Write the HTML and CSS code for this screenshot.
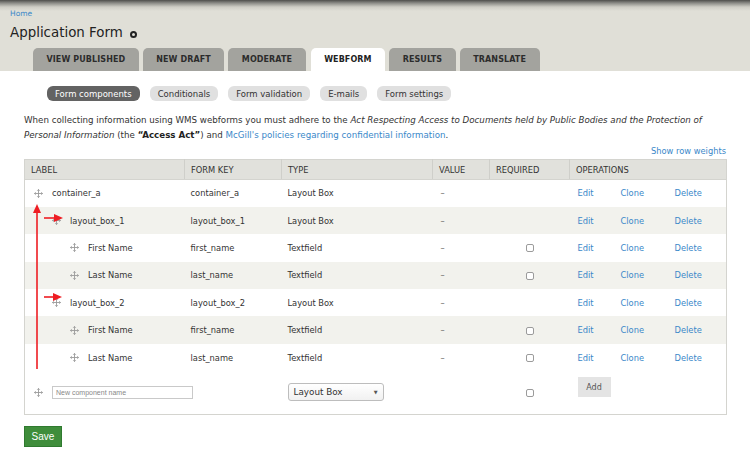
FILE: index.html
```html
<!DOCTYPE html>
<html>
<head>
<meta charset="utf-8">
<link rel="stylesheet" href="styles.css">
</head>
<body>
<header class="header">
  <a class="crumb" href="#">Home</a>
  <h1 class="title">Application Form <span class="ring"></span></h1>
  <nav class="tabs">
    <a class="tab" href="#">VIEW PUBLISHED</a>
    <a class="tab" href="#">NEW DRAFT</a>
    <a class="tab" href="#">MODERATE</a>
    <a class="tab active" href="#">WEBFORM</a>
    <a class="tab" href="#">RESULTS</a>
    <a class="tab" href="#">TRANSLATE</a>
  </nav>
</header>
<main class="main">
  <div class="subtabs">
    <a class="pill active" href="#">Form components</a>
    <a class="pill" href="#">Conditionals</a>
    <a class="pill" href="#">Form validation</a>
    <a class="pill" href="#">E-mails</a>
    <a class="pill" href="#">Form settings</a>
  </div>
  <p class="intro">When collecting information using WMS webforms you must adhere to the <em>Act Respecting Access to Documents held by Public Bodies and the Protection of Personal Information</em> (the <strong>“Access Act”</strong>) and <a href="#">McGill's policies regarding confidential information</a>.</p>
  <div class="weights"><a href="#">Show row weights</a></div>
  <div class="tablewrap">
    <table class="comp">
      <colgroup><col class="w-label"><col class="w-key"><col class="w-type"><col class="w-val"><col class="w-req"><col class="w-op1"><col class="w-op2"><col class="w-op3"></colgroup>
      <thead>
        <tr><th>LABEL</th><th>FORM KEY</th><th>TYPE</th><th>VALUE</th><th>REQUIRED</th><th colspan="3">OPERATIONS</th></tr>
      </thead>
      <tbody>
        <tr class="odd"><td><div class="lbl d0"><svg class="drag" viewBox="0 0 10 10"><path d="M5 0.5v9M0.5 5h9M3.6 1.9L5 0.5 6.4 1.9M3.6 8.1L5 9.5 6.4 8.1M1.9 3.6L0.5 5 1.9 6.4M8.1 3.6L9.5 5 8.1 6.4"/></svg>container_a</div></td><td>container_a</td><td>Layout Box</td><td class="val">–</td><td class="req"></td><td class="op"><a href="#">Edit</a></td><td class="op"><a href="#">Clone</a></td><td class="op"><a href="#">Delete</a></td></tr>
        <tr class="even"><td><div class="lbl d1"><svg class="drag" viewBox="0 0 10 10"><path d="M5 0.5v9M0.5 5h9M3.6 1.9L5 0.5 6.4 1.9M3.6 8.1L5 9.5 6.4 8.1M1.9 3.6L0.5 5 1.9 6.4M8.1 3.6L9.5 5 8.1 6.4"/></svg>layout_box_1</div></td><td>layout_box_1</td><td>Layout Box</td><td class="val">–</td><td class="req"></td><td class="op"><a href="#">Edit</a></td><td class="op"><a href="#">Clone</a></td><td class="op"><a href="#">Delete</a></td></tr>
        <tr class="odd"><td><div class="lbl d2"><svg class="drag" viewBox="0 0 10 10"><path d="M5 0.5v9M0.5 5h9M3.6 1.9L5 0.5 6.4 1.9M3.6 8.1L5 9.5 6.4 8.1M1.9 3.6L0.5 5 1.9 6.4M8.1 3.6L9.5 5 8.1 6.4"/></svg>First Name</div></td><td>first_name</td><td>Textfield</td><td class="val">–</td><td class="req"><span class="cb"></span></td><td class="op"><a href="#">Edit</a></td><td class="op"><a href="#">Clone</a></td><td class="op"><a href="#">Delete</a></td></tr>
        <tr class="even"><td><div class="lbl d2"><svg class="drag" viewBox="0 0 10 10"><path d="M5 0.5v9M0.5 5h9M3.6 1.9L5 0.5 6.4 1.9M3.6 8.1L5 9.5 6.4 8.1M1.9 3.6L0.5 5 1.9 6.4M8.1 3.6L9.5 5 8.1 6.4"/></svg>Last Name</div></td><td>last_name</td><td>Textfield</td><td class="val">–</td><td class="req"><span class="cb"></span></td><td class="op"><a href="#">Edit</a></td><td class="op"><a href="#">Clone</a></td><td class="op"><a href="#">Delete</a></td></tr>
        <tr class="odd"><td><div class="lbl d1"><svg class="drag" viewBox="0 0 10 10"><path d="M5 0.5v9M0.5 5h9M3.6 1.9L5 0.5 6.4 1.9M3.6 8.1L5 9.5 6.4 8.1M1.9 3.6L0.5 5 1.9 6.4M8.1 3.6L9.5 5 8.1 6.4"/></svg>layout_box_2</div></td><td>layout_box_2</td><td>Layout Box</td><td class="val">–</td><td class="req"></td><td class="op"><a href="#">Edit</a></td><td class="op"><a href="#">Clone</a></td><td class="op"><a href="#">Delete</a></td></tr>
        <tr class="even"><td><div class="lbl d2"><svg class="drag" viewBox="0 0 10 10"><path d="M5 0.5v9M0.5 5h9M3.6 1.9L5 0.5 6.4 1.9M3.6 8.1L5 9.5 6.4 8.1M1.9 3.6L0.5 5 1.9 6.4M8.1 3.6L9.5 5 8.1 6.4"/></svg>First Name</div></td><td>first_name</td><td>Textfield</td><td class="val">–</td><td class="req"><span class="cb"></span></td><td class="op"><a href="#">Edit</a></td><td class="op"><a href="#">Clone</a></td><td class="op"><a href="#">Delete</a></td></tr>
        <tr class="odd"><td><div class="lbl d2"><svg class="drag" viewBox="0 0 10 10"><path d="M5 0.5v9M0.5 5h9M3.6 1.9L5 0.5 6.4 1.9M3.6 8.1L5 9.5 6.4 8.1M1.9 3.6L0.5 5 1.9 6.4M8.1 3.6L9.5 5 8.1 6.4"/></svg>Last Name</div></td><td>last_name</td><td>Textfield</td><td class="val">–</td><td class="req"><span class="cb"></span></td><td class="op"><a href="#">Edit</a></td><td class="op"><a href="#">Clone</a></td><td class="op"><a href="#">Delete</a></td></tr>
        <tr class="addrow"><td><div class="lbl d0"><svg class="drag" viewBox="0 0 10 10"><path d="M5 0.5v9M0.5 5h9M3.6 1.9L5 0.5 6.4 1.9M3.6 8.1L5 9.5 6.4 8.1M1.9 3.6L0.5 5 1.9 6.4M8.1 3.6L9.5 5 8.1 6.4"/></svg><span class="input">New component name</span></div></td><td></td><td><span class="select">Layout Box<span class="caret">▼</span></span></td><td></td><td class="req"><span class="cb"></span></td><td class="op addcell" colspan="3"><span class="addbtn">Add</span></td></tr>
      </tbody>
    </table>
    <svg class="arrows" viewBox="0 0 60 220" width="60" height="220">
      <g fill="#ee1d23" stroke="#ee1d23">
        <path d="M13 210V53" stroke-width="1.6" fill="none"/>
        <path d="M13 45L9 54H17Z" stroke="none"/>
        <path d="M20 59H32" stroke-width="1.6" fill="none"/>
        <path d="M39 59L30 55V63Z" stroke="none"/>
        <path d="M20 138H31" stroke-width="1.6" fill="none"/>
        <path d="M38 138L29 134V142Z" stroke="none"/>
      </g>
    </svg>
  </div>
  <button class="save">Save</button>
</main>
</body>
</html>
```
FILE: styles.css
```css
* { box-sizing: border-box; }
body {
  margin: 0;
  font-family: "DejaVu Sans", Verdana, sans-serif;
  color: #333;
  background: #fff;
}
a { color: #3a88c9; text-decoration: none; }

.header {
  height: 71px;
  padding: 9px 0 0 10px;
  background: linear-gradient(#4e4e4b 0px, #8b8b86 3px, #cfcec6 7px, #e0dfd7 11px, #e0dfd7 100%);
  display: flex;
  flex-direction: column;
}
.crumb { font-size: 7.5px; line-height: 10px; }
.title {
  margin: 5px 0 0;
  font-size: 13.4px;
  font-weight: normal;
  color: #222;
  line-height: 18px;
  display: flex;
  align-items: center;
  gap: 7px;
}
.ring {
  width: 7px; height: 7px;
  border: 2px solid #222;
  border-radius: 50%;
  margin-top: 3px;
}
.tabs {
  margin: auto 0 0 23px;
  display: flex;
  gap: 4px;
}
.tab {
  height: 23px;
  padding: 0 13.5px;
  display: flex;
  align-items: center;
  justify-content: center;
  background: #a3a39e;
  border-radius: 5px 5px 0 0;
  color: #2c2c2c;
  font-size: 8px;
  font-weight: bold;
  letter-spacing: 0.1px;
}
.tab.active { background: #fff; color: #222; margin-left: 1px; }

.main { padding: 15px 24px 0; }
.subtabs {
  margin-left: 23px;
  display: flex;
  gap: 10px;
}
.pill {
  height: 15px;
  padding: 0 8px;
  border-radius: 6px;
  background: #e0e0e0;
  color: #333;
  font-size: 8.5px;
  display: flex;
  align-items: center;
}
.pill.active { background: #636363; color: #fff; }

.intro {
  margin: 12px 0 0;
  font-size: 8.7px;
  line-height: 15px;
  color: #333;
}
.intro strong { color: #222; }
.weights {
  text-align: right;
  font-size: 8.3px;
  line-height: 12px;
  margin-top: 2px;
}

.tablewrap { position: relative; margin-top: 2px; }
.comp {
  width: 702px;
  table-layout: fixed;
  border-collapse: collapse;
  border: 1px solid #d4d4cf;
  font-size: 8.3px;
}
.w-label { width: 160px; }
.w-key { width: 97px; }
.w-type { width: 151px; }
.w-val { width: 57px; }
.w-req { width: 80px; }
.w-op1 { width: 43px; }
.w-op2 { width: 54px; }
.w-op3 { width: 60px; }
.comp th {
  background: #e1e1dc;
  font-weight: normal;
  text-align: left;
  height: 20px;
  padding: 0 6px;
  color: #333;
  border-right: 1px solid #cfcfca;
  border-bottom: 1px solid #d4d4cf;
}
.comp th:last-child { border-right: 0; }
.comp td {
  height: 27.4px;
  padding: 0 6px;
  white-space: nowrap;
}
.comp tr.odd td, .comp tr.addrow td { background: #fff; }
.comp tr.even td { background: #f2f2ed; }
.lbl { display: flex; align-items: center; gap: 9px; }
.lbl.d0 { padding-left: 3px; }
.lbl.d1 { padding-left: 21px; }
.lbl.d2 { padding-left: 39px; }
.drag {
  width: 9px; height: 9px;
  fill: none;
  stroke: #9a9a9a;
  stroke-width: 1;
  flex: none;
}
.val { padding-left: 8px !important; color: #666; }
.req { text-align: center; }
.cb {
  display: inline-block;
  width: 8px; height: 8px;
  border: 1px solid #9b9b9b;
  border-radius: 2px;
  background: #fff;
  vertical-align: middle;
  margin-left: 1px;
}
.op { padding-left: 8px !important; }
.addrow td { height: 43px; }
.input {
  flex: none;
  width: 141px; height: 13px;
  border: 1px solid #c9c9c9;
  font-size: 7px;
  color: #888;
  font-family: "Liberation Sans", Arial, sans-serif;
  display: flex;
  align-items: center;
  padding-left: 3px;
  position: relative;
  z-index: 1;
  background: #fff;
}
.select {
  width: 96px; height: 18px;
  border: 1px solid #bdbdbd;
  border-radius: 3px;
  background: linear-gradient(#fff, #f1f1f1);
  display: flex;
  align-items: center;
  justify-content: space-between;
  padding: 0 5px;
  font-size: 8.8px;
  color: #333;
}
.caret { font-size: 5px; color: #555; }
.addcell { vertical-align: top; padding-top: 6px !important; }
.addbtn {
  display: inline-flex;
  align-items: center;
  justify-content: center;
  width: 33px; height: 20px;
  background: #e4e4e4;
  color: #555;
  font-size: 8px;
}
.arrows {
  position: absolute;
  left: 0;
  top: 0;
  pointer-events: none;
}
.save {
  margin-top: 11px;
  width: 38px; height: 21px;
  background: #3f8d3b;
  border: 1px solid #2f7a2f;
  color: #fff;
  font-family: "Liberation Sans", Arial, sans-serif;
  font-size: 10px;
  padding: 0;
}
```
